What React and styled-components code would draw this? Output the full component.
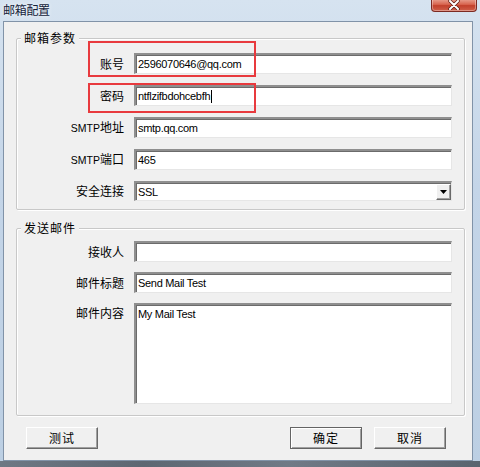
import React from "react";
import styled, { createGlobalStyle } from "styled-components";

const Global = createGlobalStyle`
  html, body { margin: 0; padding: 0; background: #c2d3e6; }
  body { font-family: "Liberation Sans", "Noto Sans CJK SC", sans-serif; }
`;

const Window = styled.div`
  width: 480px;
  height: 467px;
  display: flex;
  flex-direction: column;
  background: linear-gradient(180deg, #d6e3f0 0%, #c4d5e8 40%, #bccfe3 100%);
  overflow: hidden;
`;

const TitleBar = styled.div`
  height: 21px;
  display: flex;
  align-items: flex-start;
  padding-left: 3px;
  padding-right: 3px;
  flex: none;
`;

const Title = styled.div`
  font-family: "Noto Sans CJK SC", sans-serif;
  font-size: 12px;
  line-height: 14px;
  margin-top: 3px;
  color: #14223a;
  letter-spacing: -0.3px;
  text-shadow: 0 0 4px rgba(255, 255, 255, 0.9);
`;

const CloseBtn = styled.div`
  margin-left: auto;
  width: 44px;
  height: 12px;
  margin-top: -1px;
  border: 1px solid #7c2a22;
  border-top: none;
  border-radius: 0 0 4px 4px;
  background: linear-gradient(180deg, #e9a392 0%, #d8654f 45%, #c2402b 55%, #d0604a 100%);
  display: flex;
  align-items: center;
  justify-content: center;
  box-shadow: inset 0 0 0 1px rgba(255, 255, 255, 0.35);
`;

const Client = styled.div`
  flex: 1;
  margin: 0 7px 0 3px;
  background: #f0f0f0;
  border: 1px solid #8193a8;
  display: flex;
  flex-direction: column;
  padding-top: 16px;
`;

const BottomFrame = styled.div`
  height: 6px;
  flex: none;
  background: linear-gradient(90deg, #6e7884 0%, #5d6772 30%, #707a86 60%, #5a646f 100%);
`;

const Group = styled.div`
  position: relative;
  margin: 0 7px 0 12px;
  border: 1px solid #c8c8c8;
  box-shadow: inset 1px 1px 0 #ffffff, 1px 1px 0 #ffffff;
  border-radius: 2px;
  padding: ${(p) => p.$pad};
  margin-top: ${(p) => p.$mt || 0}px;
`;

const Legend = styled.span`
  position: absolute;
  top: -8px;
  left: 4px;
  padding: 0 3px;
  background: #f0f0f0;
  font-family: "Noto Sans CJK SC", sans-serif;
  font-size: 12px;
  line-height: 14px;
  letter-spacing: 1px;
  color: #000;
`;

const Form = styled.div`
  display: grid;
  grid-template-columns: 107px 318px;
  column-gap: 10px;
  row-gap: ${(p) => p.$gap}px;
  align-items: center;
`;

const Label = styled.label`
  font-family: "Noto Sans CJK SC", sans-serif;
  font-size: 12px;
  line-height: 14px;
  color: #000;
  text-align: right;
  align-self: ${(p) => (p.$top ? "start" : "center")};
  margin-top: ${(p) => (p.$top ? "3px" : "0")};
`;

const Latin = styled.span`
  font-family: "Liberation Sans", sans-serif;
  font-size: 10.5px;
`;

const Field = styled.div`
  position: relative;
  height: ${(p) => p.$h || 21}px;
  box-sizing: border-box;
  background: #fff;
  border-style: solid;
  border-width: 2px 1px 1px 2px;
  border-color: #8f8f8f #e6e6e6 #e6e6e6 #8f8f8f;
  box-shadow: inset 1px 1px 0 #6b6b6b;
  font-family: "Liberation Sans", sans-serif;
  font-size: 11px;
  letter-spacing: -0.3px;
  color: #000;
  padding: ${(p) => (p.$multi ? "3px 0 0 2px" : "0 0 0 2px")};
  display: flex;
  align-items: ${(p) => (p.$multi ? "flex-start" : "center")};
`;

const Caret = styled.span`
  display: inline-block;
  width: 1px;
  height: 13px;
  background: #000;
  margin-left: 1px;
`;

const DropBtn = styled.div`
  margin-left: auto;
  width: 15px;
  height: 16px;
  margin-right: 0px;
  box-sizing: border-box;
  background: #f0f0f0;
  border-style: solid;
  border-width: 1px;
  border-color: #ffffff #696969 #696969 #ffffff;
  box-shadow: inset -1px -1px 0 #a0a0a0;
  display: flex;
  align-items: center;
  justify-content: center;
`;

const Highlight = styled.div`
  position: absolute;
  left: ${(p) => p.$x}px;
  top: ${(p) => p.$y}px;
  width: ${(p) => p.$w}px;
  height: ${(p) => p.$h}px;
  border: 2px solid #e83a3e;
  box-sizing: border-box;
  pointer-events: none;
`;

const ButtonRow = styled.div`
  display: flex;
  margin-top: 11px;
  padding: 0 26px 0 22px;
  gap: 12px;
`;

const Button = styled.button`
  width: 72px;
  height: 22px;
  box-sizing: border-box;
  background: #f0f0f0;
  font-family: "Noto Sans CJK SC", sans-serif;
  font-size: 12px;
  line-height: 14px;
  letter-spacing: 1px;
  color: #000;
  padding: 0;
  border-style: solid;
  border-width: 1px;
  border-color: ${(p) => (p.$default ? "#646464" : "#ffffff #696969 #696969 #ffffff")};
  box-shadow: ${(p) =>
    p.$default
      ? "inset 1px 1px 0 #ffffff, inset -1px -1px 0 #a0a0a0"
      : "inset -1px -1px 0 #a0a0a0"};
  margin-left: ${(p) => (p.$push ? "auto" : "0")};
`;

const Stage = styled.div`
  position: relative;
`;

export default function App() {
  return (
    <>
      <Global />
      <Stage>
        <Window>
          <TitleBar>
            <Title>邮箱配置</Title>
            <CloseBtn>
              <svg width="12" height="10" viewBox="0 0 12 10">
                <path d="M2 1 L10 9 M10 1 L2 9" stroke="#5a1a12" strokeWidth="3.4" strokeLinecap="round" />
                <path d="M2 1 L10 9 M10 1 L2 9" stroke="#ffffff" strokeWidth="2" strokeLinecap="round" />
              </svg>
            </CloseBtn>
          </TitleBar>
          <Client>
            <Group $pad="14px 12px 8px 0">
              <Legend>邮箱参数</Legend>
              <Form $gap={11}>
                <Label>账号</Label>
                <Field>2596070646@qq.com</Field>
                <Label>密码</Label>
                <Field>
                  ntflzifbdohcebfh
                  <Caret />
                </Field>
                <Label>
                  <Latin>SMTP</Latin>地址
                </Label>
                <Field>smtp.qq.com</Field>
                <Label>
                  <Latin>SMTP</Latin>端口
                </Label>
                <Field>465</Field>
                <Label>安全连接</Label>
                <Field $h={20}>
                  SSL
                  <DropBtn>
                    <svg width="7" height="4" viewBox="0 0 7 4">
                      <path d="M0 0 H7 L3.5 4 Z" fill="#000" />
                    </svg>
                  </DropBtn>
                </Field>
              </Form>
            </Group>
            <Group $pad="12px 12px 11px 0" $mt={18}>
              <Legend>发送邮件</Legend>
              <Form $gap={10}>
                <Label>接收人</Label>
                <Field />
                <Label>邮件标题</Label>
                <Field>Send Mail Test</Field>
                <Label $top>邮件内容</Label>
                <Field $h={101} $multi>
                  My Mail Test
                </Field>
              </Form>
            </Group>
            <ButtonRow>
              <Button>测试</Button>
              <Button $push $default>确定</Button>
              <Button>取消</Button>
            </ButtonRow>
          </Client>
          <BottomFrame />
        </Window>
        <Highlight $x={88} $y={41} $w={168} $h={36} />
        <Highlight $x={88} $y={83} $w={168} $h={30} />
      </Stage>
    </>
  );
}
